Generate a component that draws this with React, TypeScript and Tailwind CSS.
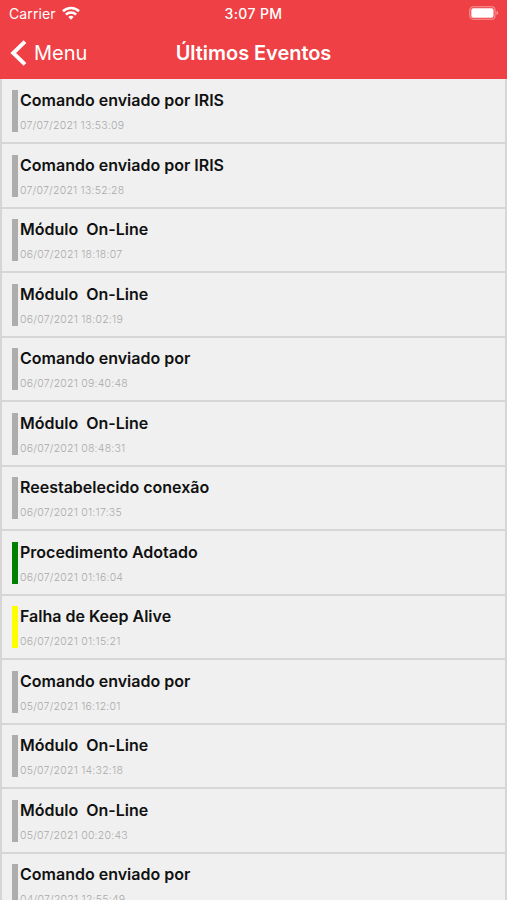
import React from 'react';

type EventItem = {
    title: string;
    date: string;
    bar: string;
};

const GRAY = 'bg-[#adadad]';

const events: EventItem[] = [
    { title: 'Comando enviado por IRIS', date: '07/07/2021 13:53:09', bar: GRAY },
    { title: 'Comando enviado por IRIS', date: '07/07/2021 13:52:28', bar: GRAY },
    { title: 'Módulo  On-Line', date: '06/07/2021 18:18:07', bar: GRAY },
    { title: 'Módulo  On-Line', date: '06/07/2021 18:02:19', bar: GRAY },
    { title: 'Comando enviado por', date: '06/07/2021 09:40:48', bar: GRAY },
    { title: 'Módulo  On-Line', date: '06/07/2021 08:48:31', bar: GRAY },
    { title: 'Reestabelecido conexão', date: '06/07/2021 01:17:35', bar: GRAY },
    { title: 'Procedimento Adotado', date: '06/07/2021 01:16:04', bar: 'bg-[#008000]' },
    { title: 'Falha de Keep Alive', date: '06/07/2021 01:15:21', bar: 'bg-[#ffff00]' },
    { title: 'Comando enviado por', date: '05/07/2021 16:12:01', bar: GRAY },
    { title: 'Módulo  On-Line', date: '05/07/2021 14:32:18', bar: GRAY },
    { title: 'Módulo  On-Line', date: '05/07/2021 00:20:43', bar: GRAY },
    { title: 'Comando enviado por', date: '04/07/2021 12:55:49', bar: GRAY },
];

function WifiIcon() {
    return (
        <svg className="mb-[2px]" width="18" height="14" viewBox="0 0 18 14" fill="none" stroke="white" strokeWidth="2.6">
            <path d="M1 5.2a11.6 11.6 0 0 1 16 0" />
            <path d="M3.9 8.6a7.3 7.3 0 0 1 10.2 0" />
            <path d="M6.3 11a3.9 3.9 0 0 1 5.4 0L9 13.8Z" fill="white" stroke="none" />
        </svg>
    );
}

function BatteryIcon() {
    return (
        <svg className="mb-px" width="30" height="14" viewBox="0 0 30 14" fill="none">
            <rect x="0.8" y="0.8" width="25.2" height="12.4" rx="3.4" stroke="#f8989b" strokeWidth="1.1" />
            <rect x="2.3" y="2.3" width="22.2" height="9.4" rx="1.8" fill="white" />
            <path d="M27.5 4.8c2.2.8 2.2 3.6 0 4.4Z" fill="#f8989b" />
        </svg>
    );
}

function StatusBar() {
    return (
        <div className="grid h-[27px] grid-cols-3 items-center px-[8px] text-[14px] leading-none">
            <div className="flex items-center gap-[6px] pl-px">
                <span className="tracking-[0.1px]">Carrier</span>
                <WifiIcon />
            </div>
            <span className="text-center font-medium tracking-[0.4px]">3:07 PM</span>
            <div className="flex justify-end">
                <BatteryIcon />
            </div>
        </div>
    );
}

function NavBar() {
    return (
        <div className="grid h-[52px] grid-cols-[1fr_auto_1fr] items-center px-[10px] leading-none">
            <button type="button" className="flex items-center gap-[7px] text-[20px]">
                <svg className="mb-px" width="17" height="26" viewBox="0 0 17 26" fill="none" stroke="white" strokeWidth="3.9">
                    <path d="M15 1.6 3.2 13 15 24.4" />
                </svg>
                <span>Menu</span>
            </button>
            <h1 className="text-[20px] font-semibold tracking-[-0.05px]">Últimos Eventos</h1>
        </div>
    );
}

function EventRow({ event }: { event: EventItem }) {
    return (
        <li className="flex h-[64.5px] shrink-0 gap-[2px] border-b-2 border-[#d6d6d6] pl-[10px] pt-[10.5px]">
            <div className={`h-[42px] w-[6px] shrink-0 ${event.bar}`} />
            <div className="whitespace-pre">
                <p className="text-[16px] font-semibold leading-[20px] text-[#111111]">{event.title}</p>
                <p className="mt-[9px] text-[10.5px] font-light leading-[14px] tracking-[0.23px] text-[#aaaaaa]">{event.date}</p>
            </div>
        </li>
    );
}

export default function App() {
    return (
        <div className="flex h-[900px] w-[507px] flex-col overflow-hidden bg-[#f0f0f0] font-['Inter','Liberation_Sans',sans-serif]">
            <header className="h-[79px] shrink-0 bg-[#ef4045] text-white">
                <StatusBar />
                <NavBar />
            </header>
            <ul className="flex flex-1 flex-col overflow-hidden border-x-2 border-[#d6d6d6] pt-[0.5px]">
                {events.map((event) => (
                    <EventRow key={event.date} event={event} />
                ))}
            </ul>
        </div>
    );
}
